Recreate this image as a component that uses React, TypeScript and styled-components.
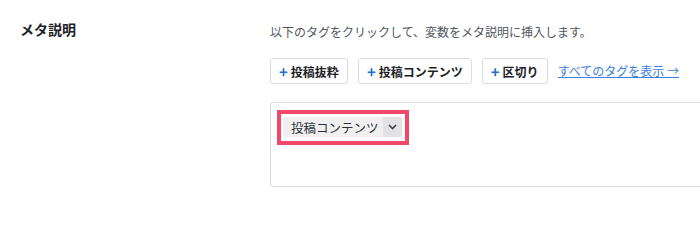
import React from 'react';
import { createGlobalStyle, styled } from 'styled-components';

const GlobalStyle = createGlobalStyle`
  html, body {
    margin: 0;
    padding: 0;
    background: #ffffff;
    overflow: hidden;
  }
  body {
    font-family: "Noto Sans CJK JP", "Noto Sans", sans-serif;
    color: #1d2327;
  }
`;

const SettingRow = styled.div`
  display: flex;
  flex-direction: row;
  width: 700px;
  height: 208px;
  padding-top: 19px;
  box-sizing: border-box;
`;

const Label = styled.div`
  width: 270px;
  flex-shrink: 0;
  padding-left: 20px;
  box-sizing: border-box;
  font-size: 14px;
  line-height: 20px;
  font-weight: 700;
  color: #1d2327;
`;

const Field = styled.div`
  display: flex;
  flex-direction: column;
  flex-shrink: 0;
`;

const Description = styled.p`
  margin: 4px 0 0;
  font-size: 12px;
  line-height: 18px;
  color: #50575e;
`;

const TagRow = styled.div`
  display: flex;
  flex-direction: row;
  align-items: center;
  gap: 10px;
  margin-top: 17px;
`;

const TagButton = styled.button`
  display: inline-flex;
  align-items: center;
  gap: 3px;
  height: 26px;
  padding: 0 8px;
  border: 1px solid #dcdcde;
  border-radius: 3px;
  background: #ffffff;
  font-family: inherit;
  font-size: 12px;
  font-weight: 700;
  color: #1d2327;
  cursor: pointer;
`;

const Plus = styled.span`
  color: #1e6fd0;
  font-size: 15px;
  line-height: 1;
  font-weight: 700;
`;

const AllTagsLink = styled.a`
  font-size: 12px;
  line-height: 18px;
  color: #3c82dc;
  text-decoration: underline;
`;

const Editor = styled.div`
  width: 450px;
  height: 85px;
  margin-top: 18px;
  padding: 7px 6px;
  box-sizing: border-box;
  border: 1px solid #dcdcde;
  border-radius: 3px;
  background: #ffffff;
`;

const Highlight = styled.div`
  display: inline-flex;
  padding: 3px 3px 4px 2px;
  border: 4px solid #f2496b;
  background: #ffffff;
`;

const Chip = styled.span`
  display: inline-flex;
  align-items: stretch;
  height: 20px;
  border-radius: 2px;
  background: #f0f0f1;
  overflow: hidden;
`;

const ChipText = styled.span`
  display: flex;
  align-items: center;
  padding: 0 4px 0 8px;
  font-size: 12.5px;
  color: #2c3338;
`;

const ChipToggle = styled.span`
  display: flex;
  align-items: center;
  justify-content: center;
  width: 19px;
  background: #e2e2e4;
`;

const tags = ['投稿抜粋', '投稿コンテンツ', '区切り'];

const App = () => (
  <>
    <GlobalStyle />
    <SettingRow>
      <Label>メタ説明</Label>
      <Field>
        <Description>以下のタグをクリックして、変数をメタ説明に挿入します。</Description>
        <TagRow>
          {tags.map((tag) => (
            <TagButton key={tag}>
              <Plus>+</Plus>
              {tag}
            </TagButton>
          ))}
          <AllTagsLink href="#">すべてのタグを表示 →</AllTagsLink>
        </TagRow>
        <Editor>
          <Highlight>
            <Chip>
              <ChipText>投稿コンテンツ</ChipText>
              <ChipToggle>
                <svg width="9" height="6" viewBox="0 0 9 6">
                  <polyline
                    points="1,1 4.5,4.5 8,1"
                    fill="none"
                    stroke="#3c434a"
                    strokeWidth="1.6"
                  />
                </svg>
              </ChipToggle>
            </Chip>
          </Highlight>
        </Editor>
      </Field>
    </SettingRow>
  </>
);

export default App;
